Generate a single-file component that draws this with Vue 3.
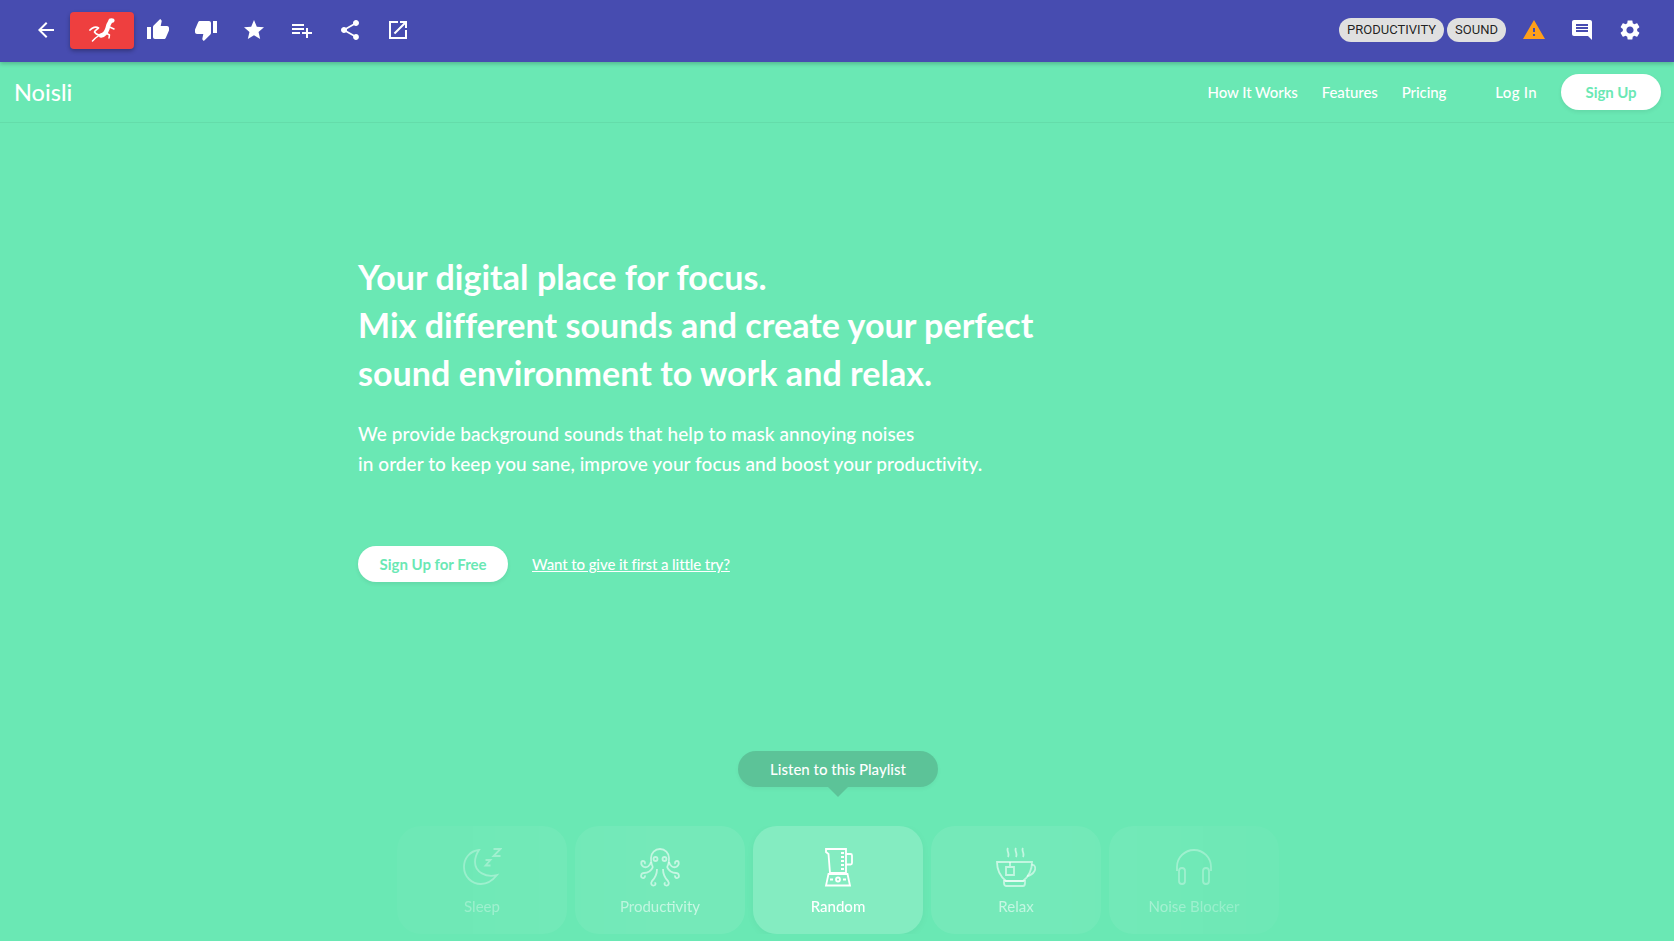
<template>
  <div class="page">
    <header class="toolbar">
      <button class="icon-btn">
        <svg viewBox="0 0 24 24"><path :d="icons.back" /></svg>
      </button>
      <button class="lizard-btn">
        <svg viewBox="0 0 26 24" class="lizard">
          <path class="liz-tail" d="M1 12C3 9.500 7 8 9.500 10C8 11.500 6 12.500 5.500 14C7 16 10 17.500 13 17.500" />
          <path class="liz-body" d="M12 17.500C16 17 17.500 13.500 18.500 10.500C19 8 19.500 6 21 4" />
          <path class="liz-leg" d="M10 17.500L6.500 20L3.500 23M17 15L20.500 17L20 20M19.500 8.500L25 11" />
          <ellipse cx="22.500" cy="2.500" rx="3" ry="2.300" />
        </svg>
      </button>
      <button v-for="n in leftIcons" :key="n" class="icon-btn">
        <svg viewBox="0 0 24 24"><path :d="icons[n]" /></svg>
      </button>
      <div class="spacer"></div>
      <span class="chip">PRODUCTIVITY</span>
      <span class="chip">SOUND</span>
      <button class="icon-btn warn">
        <svg viewBox="0 0 24 24"><path :d="icons.warning" /></svg>
      </button>
      <button class="icon-btn">
        <svg viewBox="0 0 24 24"><path :d="icons.comment" /></svg>
      </button>
      <button class="icon-btn">
        <svg viewBox="0 0 24 24"><path :d="icons.settings" /></svg>
      </button>
    </header>

    <nav class="nav">
      <span class="logo">Noisli</span>
      <div class="nav-links">
        <a>How It Works</a>
        <a>Features</a>
        <a>Pricing</a>
        <a class="login">Log In</a>
        <a class="pill">Sign Up</a>
      </div>
    </nav>

    <main class="hero">
      <h1>Your digital place for focus.<br />Mix different sounds and create your perfect<br />sound environment to work and relax.</h1>
      <p>We provide background sounds that help to mask annoying noises<br />in order to keep you sane, improve your focus and boost your productivity.</p>
      <div class="cta">
        <a class="pill big">Sign Up for Free</a>
        <a class="try">Want to give it first a little try?</a>
      </div>
    </main>

    <section class="playlists">
      <div class="tip">Listen to this Playlist</div>
      <div class="cards">
        <div v-for="c in cards" :key="c.name" class="card" :class="{ active: c.active }">
          <svg viewBox="0 0 40 40" class="card-icon">
            <path v-for="d in c.paths" :key="d" :d="d" />
          </svg>
          <span>{{ c.name }}</span>
        </div>
      </div>
    </section>
  </div>
</template>

<script setup>
const icons = {
  back: 'M20 11H7.83l5.59-5.59L12 4l-8 8 8 8 1.41-1.41L7.83 13H20v-2z',
  up: 'M1 21h4V9H1v12zm22-11c0-1.1-.9-2-2-2h-6.31l.95-4.57.03-.32c0-.41-.17-.79-.44-1.06L14.17 1 7.59 7.59C7.22 7.95 7 8.45 7 9v10c0 1.1.9 2 2 2h9c.83 0 1.54-.5 1.84-1.22l3.02-7.05c.09-.23.14-.47.14-.73v-2z',
  down: 'M15 3H6c-.83 0-1.54.5-1.84 1.22l-3.02 7.05c-.09.23-.14.47-.14.73v2c0 1.1.9 2 2 2h6.31l-.95 4.57-.03.32c0 .41.17.79.44 1.06L9.83 23l6.59-6.59c.36-.36.58-.86.58-1.41V5c0-1.1-.9-2-2-2zm4 0v12h4V3h-4z',
  star: 'M12 17.27L18.18 21l-1.64-7.03L22 9.24l-7.19-.61L12 2 9.19 8.63 2 9.24l5.46 4.73L5.82 21z',
  playlist: 'M14 10H2v2h12v-2zm0-4H2v2h12V6zm4 8v-4h-2v4h-4v2h4v4h2v-4h4v-2h-4zM2 16h8v-2H2v2z',
  share: 'M18 16.08c-.76 0-1.44.3-1.96.77L8.91 12.7c.05-.23.09-.46.09-.7s-.04-.47-.09-.7l7.05-4.11c.54.5 1.25.81 2.04.81 1.66 0 3-1.34 3-3s-1.34-3-3-3-3 1.34-3 3c0 .24.04.47.09.7L8.04 9.81C7.5 9.31 6.79 9 6 9c-1.66 0-3 1.34-3 3s1.34 3 3 3c.79 0 1.5-.31 2.04-.81l7.12 4.16c-.05.21-.08.43-.08.65 0 1.61 1.31 2.92 2.92 2.92 1.61 0 2.92-1.31 2.92-2.92s-1.31-2.92-2.92-2.92z',
  open: 'M3 3v18h18v-9h-2v7H5V5h7V3zm11 0v2h3.59l-9.83 9.83 1.41 1.41L19 6.41V10h2V3z',
  warning: 'M1 21h22L12 2 1 21zm12-3h-2v-2h2v2zm0-4h-2v-4h2v4z',
  comment: 'M21.99 4c0-1.1-.89-2-1.99-2H4c-1.1 0-2 .9-2 2v12c0 1.1.9 2 2 2h14l4 4-.01-18zM18 14H6v-2h12v2zm0-3H6V9h12v2zm0-3H6V6h12v2z',
  settings: 'M19.14 12.94c.04-.3.06-.61.06-.94 0-.32-.02-.64-.07-.94l2.03-1.58c.18-.14.23-.41.12-.61l-1.92-3.32c-.12-.22-.37-.29-.59-.22l-2.39.96c-.5-.38-1.03-.7-1.62-.94l-.36-2.54c-.04-.24-.24-.41-.48-.41h-3.84c-.24 0-.43.17-.47.41l-.36 2.54c-.59.24-1.13.57-1.62.94l-2.39-.96c-.22-.08-.47 0-.59.22L2.74 8.87c-.12.21-.08.47.12.61l2.03 1.58c-.05.3-.09.63-.09.94s.02.64.07.94l-2.03 1.58c-.18.14-.23.41-.12.61l1.92 3.32c.12.22.37.29.59.22l2.39-.96c.5.38 1.03.7 1.62.94l.36 2.54c.05.24.24.41.48.41h3.84c.24 0 .44-.17.47-.41l.36-2.54c.59-.24 1.13-.56 1.62-.94l2.39.96c.22.08.47 0 .59-.22l1.92-3.32c.12-.22.07-.47-.12-.61l-2.01-1.58zM12 15.6c-1.98 0-3.6-1.62-3.6-3.6s1.62-3.6 3.6-3.6 3.6 1.62 3.6 3.6-1.62 3.6-3.6 3.6z'
}

const leftIcons = ['up', 'down', 'star', 'playlist', 'share', 'open']

const cards = [
  {
    name: 'Sleep',
    paths: [
      'M17 3C8 4 2 11 2 20C2 30 10 37 19 37C26 37 31 33 35 28C24 31 13 25 13 15C13 10 15 6 17 3Z',
      'M31.500 2H38.500L31.500 9H38.500',
      'M23.500 13H28.500L23.500 18.500H28.500'
    ]
  },
  {
    name: 'Productivity',
    paths: [
      'M13 20C11 17 11 14 11 11A9 9 0 0 1 29 11C29 14 29 17 27 20',
      'M13.500 12A2 2 0 1 0 17.500 12A2 2 0 1 0 13.500 12M22.500 12A2 2 0 1 0 26.500 12A2 2 0 1 0 22.500 12',
      'M11 15C10 19 7 21 4 20C0 18 1 14 3 14C5 14 5.500 16 4.500 17',
      'M29 15C30 19 33 21 36 20C40 18 39 14 37 14C35 14 34.500 16 35.500 17',
      'M13 20C11 24 8 26 4 26C1 26 0 30 2.500 31C4.500 31.500 5.500 29.500 4.500 28.500',
      'M27 20C29 24 32 26 36 26C39 26 40 30 37.500 31C35.500 31.500 34.500 29.500 35.500 28.500',
      'M17 22C17 28 15 31 12 34C10 37 12 39 14 38.500C16 38 16 36 14.500 35.500',
      'M23 22C23 28 25 31 28 34C30 37 28 39 26 38.500C24 38 24 36 25.500 35.500'
    ]
  },
  {
    name: 'Random',
    active: true,
    paths: [
      'M8 2H28V26H12L10.500 7L8 5Z',
      'M28 7H32.500C33.500 7 34 7.500 34 8.500V16C34 17 33.500 17.500 32.500 17.500H28',
      'M23 6H26M23 10H26M23 14H26M23 18H26M23 22H26',
      'M10.500 27H29.500L32 38.500H8Z',
      'M18 32.500A2 2 0 1 0 22 32.500A2 2 0 1 0 18 32.500',
      'M12 32.500H15M25 32.500H28'
    ]
  },
  {
    name: 'Relax',
    paths: [
      'M12 1C10 4 14 6 12 10M20 1C18 4 22 6 20 10M27 1C25 4 29 6 27 10',
      'M1 15H36C36 24 32 30 27 34H10C5 30 1 24 1 15Z',
      'M35.500 18C39 17 40 21 38.500 24C37 27 33 29 31 29',
      'M8 34H29V36C29 38 28 39 27 39H10C9 39 8 38 8 36Z',
      'M14 15V20M10 20H18V28H10Z'
    ]
  },
  {
    name: 'Noise Blocker',
    paths: [
      'M3 24V20A17 17 0 0 1 37 20V24',
      'M5 24C5 22 6 21 8 21C10 21 11 22 11 24V34C11 36 10 37 8 37C6 37 5 36 5 34Z',
      'M29 24C29 22 30 21 32 21C34 21 35 22 35 24V34C35 36 34 37 32 37C30 37 29 36 29 34Z'
    ]
  }
]
</script>

<style>
html,
body {
  margin: 0;
  background: #6ae8b4;
}
</style>

<style scoped>
.page {
  height: 941px;
  overflow: hidden;
  display: flex;
  flex-direction: column;
  background: #6ae8b4;
  color: #fff;
  font-family: "Lato", "Open Sans", sans-serif;
}

.toolbar {
  height: 60px;
  padding: 0 20px 2px 22px;
  display: flex;
  align-items: center;
  flex-shrink: 0;
  background: #474cb0;
  box-shadow: 0 2px 4px rgba(0, 0, 0, 0.2);
  position: relative;
  z-index: 2;
  font-family: "Roboto", sans-serif;
}

.spacer {
  flex: 1;
}

button {
  border: none;
  background: none;
  padding: 0;
  cursor: pointer;
}

.icon-btn {
  width: 48px;
  height: 48px;
  display: flex;
  align-items: center;
  justify-content: center;
}

.icon-btn svg {
  width: 24px;
  height: 24px;
  fill: #fff;
}

.icon-btn.warn {
  margin-left: 4px;
}

.icon-btn.warn svg {
  fill: #ff9f1a;
}

.lizard-btn {
  width: 64px;
  height: 37px;
  border-radius: 4px;
  background: #ee3f3f;
  box-shadow: 0 2px 4px rgba(0, 0, 0, 0.3);
  display: flex;
  align-items: center;
  justify-content: center;
}

.lizard {
  width: 26px;
  height: 24px;
  fill: #fff;
}

.lizard path {
  fill: none;
  stroke: #fff;
  stroke-linecap: round;
  stroke-linejoin: round;
}

.lizard .liz-tail {
  stroke-width: 1.7;
}

.lizard .liz-body {
  stroke-width: 4.4;
}

.lizard .liz-leg {
  stroke-width: 1.5;
}

.chip {
  height: 24px;
  line-height: 24px;
  padding: 0 8px;
  margin-left: 3px;
  border-radius: 12px;
  background: #e0e0e0;
  color: rgba(0, 0, 0, 0.87);
  font-size: 13px;
}

.nav {
  height: 61px;
  padding: 0 13px 0 14px;
  flex-shrink: 0;
  display: flex;
  align-items: center;
  justify-content: space-between;
  border-bottom: 1px solid rgba(0, 0, 0, 0.05);
  box-sizing: border-box;
}

.logo {
  font-size: 23.5px;
  font-weight: 500;
}

.nav-links {
  display: flex;
  align-items: center;
  gap: 24px;
  font-size: 15px;
  font-weight: 500;
  letter-spacing: -0.08px;
}

.login {
  margin-left: 25px;
  letter-spacing: 0.3px;
}

.pill {
  display: inline-block;
  width: 100px;
  height: 36px;
  line-height: 36px;
  text-align: center;
  border-radius: 18px;
  background: #fff;
  color: #6ae8b4;
  font-weight: 700;
  box-shadow: 0 2px 4px rgba(0, 0, 0, 0.07);
}

.pill.big {
  width: 150px;
  font-size: 15px;
}

.hero {
  padding: 130px 0 0 358px;
}

h1 {
  margin: 0;
  font-size: 34px;
  line-height: 48px;
  font-weight: 700;
  letter-spacing: 0.05px;
}

.hero p {
  margin: 22px 0 0;
  font-size: 19px;
  line-height: 30px;
  font-weight: 500;
  letter-spacing: 0.07px;
}

.cta {
  margin-top: 67px;
  display: flex;
  align-items: center;
  gap: 24px;
}

.try {
  font-size: 15px;
  font-weight: 500;
  letter-spacing: -0.1px;
  text-decoration: underline;
}

.playlists {
  position: absolute;
  top: 751px;
  left: 0;
  width: 1676px;
  display: flex;
  flex-direction: column;
  align-items: center;
}

.tip {
  position: relative;
  width: 200px;
  height: 36px;
  line-height: 36px;
  text-align: center;
  border-radius: 18px;
  background: #5cc398;
  font-size: 15px;
  font-weight: 500;
  box-shadow: 0 2px 4px rgba(0, 0, 0, 0.04);
}

.tip::after {
  content: "";
  position: absolute;
  left: 90px;
  top: 36px;
  border: 10px solid transparent;
  border-bottom: none;
  border-top-color: #5cc398;
}

.cards {
  margin-top: 39px;
  display: flex;
  gap: 8px;
  -webkit-mask-image: linear-gradient(to right, rgba(0, 0, 0, 0.35) 0, #000 32%, #000 68%, rgba(0, 0, 0, 0.35) 100%);
  mask-image: linear-gradient(to right, rgba(0, 0, 0, 0.35) 0, #000 32%, #000 68%, rgba(0, 0, 0, 0.35) 100%);
}

.card {
  width: 170px;
  height: 108px;
  box-sizing: border-box;
  padding-top: 21px;
  border-radius: 24px;
  background: rgba(255, 255, 255, 0.08);
  display: flex;
  flex-direction: column;
  align-items: center;
  font-size: 15px;
  font-weight: 400;
  color: rgba(255, 255, 255, 0.6);
}

.card.active {
  background: rgba(255, 255, 255, 0.18);
  color: #fff;
  font-weight: 500;
  box-shadow: 0 2px 8px rgba(0, 0, 0, 0.04);
}

.card-icon {
  width: 40px;
  height: 40px;
  margin-bottom: 9.5px;
  fill: none;
  stroke: currentColor;
  stroke-width: 1.8;
}
</style>
